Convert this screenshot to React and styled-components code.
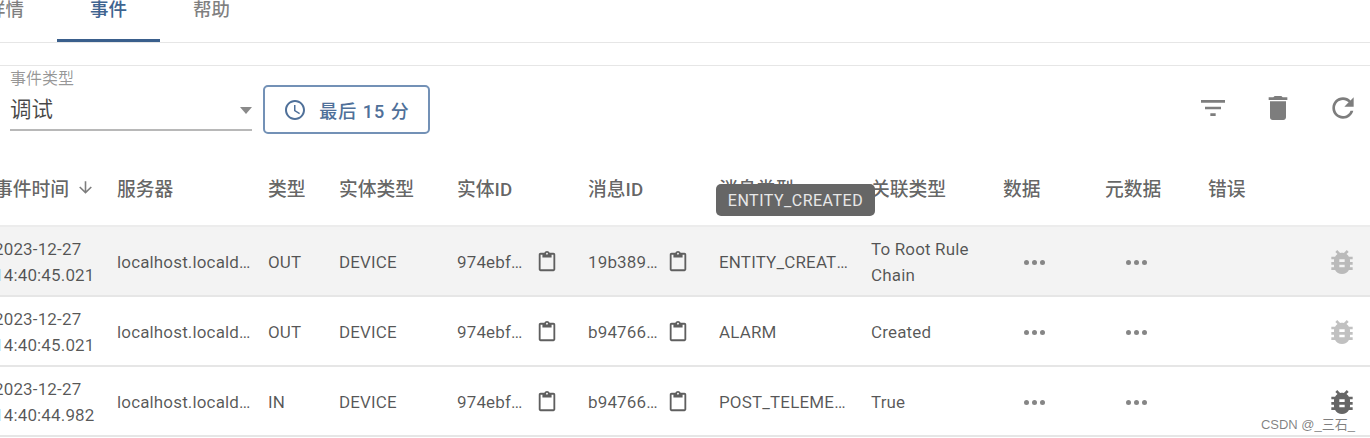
import React from "react";
import styled, { createGlobalStyle } from "styled-components";

const GlobalStyle = createGlobalStyle`
  html, body {
    margin: 0;
    padding: 0;
    background: #ffffff;
    overflow: hidden;
  }
  body {
    font-family: Roboto, "Noto Sans CJK SC", sans-serif;
  }
`;

const COLUMNS = "123px 151px 71px 118px 131px 131px 152px 132px 102px 103px 120px 1fr";

const Page = styled.div`
  width: 1370px;
  height: 438px;
  position: relative;
  overflow: hidden;
`;

const TabBar = styled.div`
  height: 42px;
  display: flex;
  align-items: flex-end;
  margin-left: -46px;
  border-bottom: 1px solid #e6e6e6;
`;

const Tab = styled.div`
  width: 103px;
  height: 42px;
  box-sizing: border-box;
  padding-bottom: 24px;
  display: flex;
  align-items: center;
  justify-content: center;
  font-size: 18.5px;
  font-weight: 500;
  color: ${(props) => (props.$active ? "#3f6490" : "rgba(0, 0, 0, 0.5)")};
  border-bottom: 3px solid ${(props) => (props.$active ? "#3a5f8c" : "transparent")};
`;

const Toolbar = styled.div`
  margin-top: 22px;
  height: 80px;
  padding: 0 11px 0 10px;
  display: flex;
  align-items: flex-start;
  border-top: 1px solid #e6e6e6;
`;

const Field = styled.div`
  width: 242px;
  height: 65px;
  box-sizing: border-box;
  border-bottom: 2px solid #b8b8b8;
  display: flex;
  flex-direction: column;
`;

const FieldLabel = styled.div`
  margin-top: 4px;
  font-size: 16px;
  line-height: 18px;
  color: rgba(0, 0, 0, 0.42);
`;

const FieldValue = styled.div`
  margin-top: 7px;
  display: flex;
  align-items: center;
  justify-content: space-between;
  font-size: 21.5px;
  line-height: 30px;
  color: rgba(0, 0, 0, 0.72);
`;

const Caret = styled.span`
  width: 0;
  height: 0;
  margin: 0;
  border-left: 6.5px solid transparent;
  border-right: 6.5px solid transparent;
  border-top: 7px solid #8a8a8a;
`;

const RangeButton = styled.div`
  margin: 19px 0 0 11px;
  width: 167px;
  height: 49px;
  box-sizing: border-box;
  border: 2px solid #7391b6;
  border-radius: 5px;
  display: flex;
  align-items: center;
  justify-content: center;
  gap: 12px;
  font-size: 18px;
  font-weight: 500;
  letter-spacing: 1px;
  color: #4f7099;
`;

const ToolbarActions = styled.div`
  margin: 26px 0 0 auto;
  display: flex;
  align-items: center;
  gap: 33px;
`;

const Table = styled.div`
  margin-left: -6px;
`;

const Row = styled.div`
  display: grid;
  grid-template-columns: ${COLUMNS};
  align-items: center;
  height: ${(props) => (props.$header ? "81px" : "70px")};
  box-sizing: border-box;
  background: ${(props) => (props.$highlight ? "#f3f3f3" : "transparent")};
  border-bottom: 2px solid ${(props) => (props.$header ? "#ececec" : "#e6e6e6")};
`;

const HeaderCell = styled.div`
  display: flex;
  align-items: center;
  gap: 7px;
  height: 36px;
  margin-top: 4px;
  font-size: 18.8px;
  font-weight: 500;
  white-space: nowrap;
  color: rgba(0, 0, 0, 0.62);
`;

const Cell = styled.div`
  min-width: 0;
  padding-top: 1px;
  font-size: 17px;
  line-height: 26px;
  letter-spacing: 0.15px;
  color: rgba(0, 0, 0, 0.66);
`;

const Truncated = styled.div`
  width: ${(props) => props.$width}px;
  overflow: hidden;
  white-space: nowrap;
  text-overflow: ellipsis;
`;

const CopyCell = styled(Cell)`
  display: flex;
  align-items: center;
  justify-content: space-between;
  width: 101px;
`;

const MoreDots = styled.div`
  display: flex;
  gap: 3px;
  margin: 2px 0 0 21px;
`;

const Dot = styled.span`
  width: 5px;
  height: 5px;
  border-radius: 50%;
  background: #868686;
`;

const BugSlot = styled.div`
  margin-left: -2px;
  padding-top: 2px;
`;

const Tooltip = styled.div`
  position: absolute;
  left: 716px;
  top: 184px;
  width: 159px;
  height: 32px;
  border-radius: 5px;
  background: #666666;
  color: #e8e8e8;
  font-size: 16px;
  letter-spacing: 0.5px;
  display: flex;
  align-items: center;
  justify-content: center;
`;

const Watermark = styled.div`
  position: absolute;
  right: 15px;
  top: 414px;
  font-family: "Liberation Sans", "Noto Sans CJK SC", sans-serif;
  font-size: 13px;
  color: rgba(0, 0, 0, 0.5);
  background: rgba(255, 255, 255, 0.4);
`;

const Icon = ({ d, size = 24, color = "#7d7d7d", opacity = 1 }) => (
  <svg width={size} height={size} viewBox="0 0 24 24" fill={color} opacity={opacity} style={{ display: "block", flexShrink: 0 }}>
    <path d={d} />
  </svg>
);

const ICONS = {
  clock:
    "M11.99 2C6.47 2 2 6.48 2 12s4.47 10 9.99 10C17.52 22 22 17.52 22 12S17.52 2 11.99 2zM12 20c-4.42 0-8-3.58-8-8s3.58-8 8-8 8 3.58 8 8-3.58 8-8 8zm.5-13H11v6l5.25 3.15.75-1.23-4.5-2.67z",
  filter: "M10 18h4v-2h-4v2zM3 6v2h18V6H3zm3 7h12v-2H6v2z",
  trash: "M6 19c0 1.1.9 2 2 2h8c1.1 0 2-.9 2-2V7H6v12zM19 4h-3.5l-1-1h-5l-1 1H5v2h14V4z",
  refresh:
    "M17.65 6.35C16.2 4.9 14.21 4 12 4c-4.42 0-7.99 3.58-7.99 8s3.57 8 7.99 8c3.73 0 6.84-2.55 7.73-6h-2.08c-.82 2.33-3.04 4-5.65 4-3.31 0-6-2.69-6-6s2.69-6 6-6c1.66 0 3.14.69 4.22 1.78L13 11h7V4l-2.35 2.35z",
  arrow: "M20 12l-1.41-1.41L13 16.17V4h-2v12.17l-5.58-5.59L4 12l8 8 8-8z",
  clipboard:
    "M19 2h-4.18C14.4.84 13.3 0 12 0c-1.3 0-2.4.84-2.82 2H5c-1.1 0-2 .9-2 2v16c0 1.1.9 2 2 2h14c1.1 0 2-.9 2-2V4c0-1.1-.9-2-2-2zm-7 0c.55 0 1 .45 1 1s-.45 1-1 1-1-.45-1-1 .45-1 1-1zm7 18H5V4h2v3h10V4h2v16z",
  bug:
    "M20 8h-2.81c-.45-.78-1.07-1.45-1.82-1.96L17 4.41 15.59 3l-2.17 2.17C12.96 5.06 12.49 5 12 5c-.49 0-.96.06-1.41.17L8.41 3 7 4.41l1.62 1.63C7.88 6.55 7.26 7.22 6.81 8H4v2h2.09c-.05.33-.09.66-.09 1v1H4v2h2v1c0 .34.04.67.09 1H4v2h2.81c1.04 1.79 2.97 3 5.19 3s4.15-1.21 5.19-3H20v-2h-2.09c.05-.33.09-.66.09-1v-1h2v-2h-2v-1c0-.34-.04-.67-.09-1H20V8zm-6 8h-4v-2h4v2zm0-4h-4v-2h4v2z",
};

const HEADERS = ["事件时间", "服务器", "类型", "实体类型", "实体ID", "消息ID", "消息类型", "关联类型", "数据", "元数据", "错误"];

const ROWS = [
  {
    time: "14:40:45.021",
    dir: "OUT",
    msgId: "19b38920-a47e",
    msgType: "ENTITY_CREATED",
    relation: "To Root Rule Chain",
    highlight: true,
    bugOpacity: 0.4,
  },
  { time: "14:40:45.021", dir: "OUT", msgId: "b9476610-a47e", msgType: "ALARM", relation: "Created", bugOpacity: 0.4 },
  {
    time: "14:40:44.982",
    dir: "IN",
    msgId: "b9476600-a47e",
    msgType: "POST_TELEMETRY_REQUEST",
    relation: "True",
    bugOpacity: 1,
  },
];

const More = () => (
  <MoreDots>
    <Dot />
    <Dot />
    <Dot />
  </MoreDots>
);

const CopyValue = ({ value, width }) => (
  <CopyCell>
    <Truncated $width={width}>{value}</Truncated>
    <Icon d={ICONS.clipboard} size={22} color="#5f5f5f" />
  </CopyCell>
);

export default function App() {
  return (
    <Page>
      <GlobalStyle />
      <TabBar>
        <Tab>详情</Tab>
        <Tab $active>事件</Tab>
        <Tab>帮助</Tab>
      </TabBar>
      <Toolbar>
        <Field>
          <FieldLabel>事件类型</FieldLabel>
          <FieldValue>
            调试
            <Caret />
          </FieldValue>
        </Field>
        <RangeButton>
          <Icon d={ICONS.clock} size={24} color="#4f7099" />
          最后 15 分
        </RangeButton>
        <ToolbarActions>
          <Icon d={ICONS.filter} size={32} />
          <Icon d={ICONS.trash} size={32} />
          <Icon d={ICONS.refresh} size={32} />
        </ToolbarActions>
      </Toolbar>
      <Table>
        <Row $header>
          {HEADERS.map((label, index) => (
            <HeaderCell key={label}>
              {label}
              {index === 0 && <Icon d={ICONS.arrow} size={19} />}
            </HeaderCell>
          ))}
        </Row>
        {ROWS.map((row) => (
          <Row key={row.msgId} $highlight={row.highlight}>
            <Cell>
              2023-12-27
              <br />
              {row.time}
            </Cell>
            <Cell>
              <Truncated $width={136}>localhost.localdomain</Truncated>
            </Cell>
            <Cell>{row.dir}</Cell>
            <Cell>DEVICE</Cell>
            <CopyValue value="974ebf60-a47e" width={68} />
            <CopyValue value={row.msgId} width={70} />
            <Cell>
              <Truncated $width={130}>{row.msgType}</Truncated>
            </Cell>
            <Cell>{row.relation}</Cell>
            <More />
            <More />
            <span />
            <BugSlot>
              <Icon d={ICONS.bug} size={32} color="#666666" opacity={row.bugOpacity} />
            </BugSlot>
          </Row>
        ))}
      </Table>
      <Tooltip>ENTITY_CREATED</Tooltip>
      <Watermark>CSDN @_三石_</Watermark>
    </Page>
  );
}
